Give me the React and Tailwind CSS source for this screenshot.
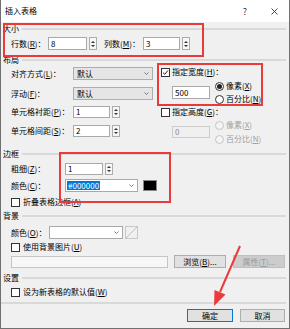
import clsx from 'clsx';

function Key({ text, k, tail = '' }) {
  return (
    <span className="whitespace-nowrap">
      {text}(<span className="underline">{k}</span>){tail}
    </span>
  );
}

function Group({ title, className }) {
  return (
    <div className={clsx('flex items-center h-[12px] pr-[3px]', className)}>
      <span>{title}</span>
      <div className="ml-[3px] flex-1 h-[2px] bg-[#d9d9d9]" />
    </div>
  );
}

function Arrows() {
  return (
    <div className="w-[8px] h-full border border-[#adadad] bg-[#f6f6f6] flex flex-col items-center justify-center gap-[2px]">
      <svg width="4" height="2" viewBox="0 0 4 2"><path d="M0 2 L2 0 L4 2Z" fill="#333" /></svg>
      <svg width="4" height="2" viewBox="0 0 4 2"><path d="M0 0 L2 2 L4 0Z" fill="#333" /></svg>
    </div>
  );
}

function Spin({ value, w = 'w-[38px]' }) {
  return (
    <div className="flex h-full items-stretch gap-[2px]">
      <div className={clsx(w, 'bg-white border border-[#a9a9a9] flex items-center pl-[2px]')}>{value}</div>
      <Arrows />
    </div>
  );
}

function Chevron({ color = '#606060' }) {
  return (
    <svg width="5" height="3" viewBox="0 0 5 3" className="shrink-0">
      <path d="M0.5 0.5 L2.5 2.5 L4.5 0.5" stroke={color} strokeWidth="0.8" fill="none" />
    </svg>
  );
}

function Check({ checked }) {
  return (
    <span className="w-[9px] h-[9px] border border-[#333] bg-white flex items-center justify-center shrink-0">
      {checked && (
        <svg width="7" height="7" viewBox="0 0 7 7">
          <path d="M1 3.6 L2.8 5.3 L6 1.4" stroke="#222" strokeWidth="1" fill="none" />
        </svg>
      )}
    </span>
  );
}

function Radio({ checked, disabled }) {
  return (
    <span className={clsx('w-[9px] h-[9px] rounded-full border flex items-center justify-center shrink-0',
      disabled ? 'border-[#c4c4c4] bg-[#f4f4f4]' : 'border-[#333] bg-white')}>
      {checked && <span className="w-[5px] h-[5px] rounded-full bg-[#222]" />}
    </span>
  );
}

function Btn({ children, w, primary, disabled, className }) {
  return (
    <div className={clsx(w, 'h-[13px] border flex items-center justify-center', className,
      primary ? 'border-[#0078d7] bg-[#e1e1e1]' : disabled ? 'border-[#bfbfbf] bg-[#cccccc] text-[#9a9a9a]' : 'border-[#adadad] bg-[#e1e1e1]')}>
      {children}
    </div>
  );
}

export default function App() {
  return (
    <div className="relative w-[290px] h-[329px] bg-[#f0f0f0] border-x border-b border-[#707070] flex flex-col text-[8px] leading-none text-black font-['Noto_Sans_CJK_SC','Noto_Sans',sans-serif]">
      {/* title bar */}
      <div className="h-[22px] bg-white flex items-center pl-[4px] pr-[11px] shrink-0">
        <span className="text-[8px]">插入表格</span>
        <span className="ml-auto text-[9px] text-[#333]">?</span>
        <svg width="7" height="7" viewBox="0 0 7 7" className="ml-[24px]">
          <path d="M0.5 0.5 L6.5 6.5 M6.5 0.5 L0.5 6.5" stroke="#333" strokeWidth="0.9" />
        </svg>
      </div>

      <div className="flex flex-col pl-[2px]">
        <Group title="大小" className="mt-[1px]" />
        <div className="mt-[2px] h-[13px] flex items-center pl-[8px]">
          <span className="w-[37px]"><Key text="行数" k="R" tail="：" /></span>
          <Spin value="8" w="w-[39px]" />
          <span className="ml-[7px] w-[39px]"><Key text="列数" k="M" tail="：" /></span>
          <Spin value="3" w="w-[37px]" />
        </div>

        <Group title="布局" className="mt-[4px]" />
        <div className="flex">
          <div className="w-[150px] pl-[8px] flex flex-col">
            <div className="mt-[1px] h-[13px] flex items-center">
              <span className="w-[62px]"><Key text="对齐方式" k="L" tail="：" /></span>
              <div className="w-[80px] h-full bg-[#e5e5e5] border border-[#adadad] flex items-center px-[3px]">
                <span className="flex-1">默认</span><Chevron />
              </div>
            </div>
            <div className="mt-[7px] h-[13px] flex items-center">
              <span className="w-[62px]"><Key text="浮动" k="F" tail="：" /></span>
              <div className="w-[80px] h-full bg-[#e5e5e5] border border-[#adadad] flex items-center px-[3px]">
                <span className="flex-1">默认</span><Chevron />
              </div>
            </div>
            <div className="mt-[6px] h-[12px] flex items-center">
              <span className="w-[62px]"><Key text="单元格衬距" k="P" tail="：" /></span>
              <Spin value="1" w="w-[37px]" />
            </div>
            <div className="mt-[7px] h-[12px] flex items-center">
              <span className="w-[62px]"><Key text="单元格间距" k="S" tail="：" /></span>
              <Spin value="2" w="w-[37px]" />
            </div>
          </div>

          <div className="pl-[8px] flex flex-col">
            <div className="h-[12px] flex items-center">
              <Check checked />
              <span className="ml-[2px]"><Key text="指定宽度" k="H" tail="：" /></span>
            </div>
            <div className="mt-[2px] flex">
              <div className="ml-[11px] self-center w-[38px] h-[13px] bg-white border border-[#a9a9a9] flex items-center pl-[2px]">500</div>
              <div className="ml-[5px] flex flex-col gap-[1px]">
                <div className="h-[12px] flex items-center"><Radio checked /><span className="ml-[2px]"><Key text="像素" k="X" /></span></div>
                <div className="h-[12px] flex items-center"><Radio /><span className="ml-[2px]"><Key text="百分比" k="N" /></span></div>
              </div>
            </div>
            <div className="mt-[1px] h-[12px] flex items-center">
              <Check />
              <span className="ml-[2px]"><Key text="指定高度" k="G" tail="：" /></span>
            </div>
            <div className="mt-[1px] flex">
              <div className="ml-[11px] self-center w-[38px] h-[12px] bg-[#f0f0f0] border border-[#cccccc] text-[#8a8a8a] flex items-center pl-[2px]">0</div>
              <div className="ml-[5px] flex flex-col gap-[2px] text-[#a0a0a0]">
                <div className="h-[12px] flex items-center"><Radio disabled /><span className="ml-[2px]"><Key text="像素" k="X" /></span></div>
                <div className="h-[12px] flex items-center"><Radio disabled /><span className="ml-[2px]"><Key text="百分比" k="N" /></span></div>
              </div>
            </div>
          </div>
        </div>

        <Group title="边框" className="mt-[3px]" />
        <div className="mt-[3px] h-[12px] flex items-center pl-[8px]">
          <span className="w-[54px]"><Key text="粗细" k="Z" tail="：" /></span>
          <Spin value="1" w="w-[38px]" />
        </div>
        <div className="mt-[4px] h-[13px] flex items-center pl-[8px]">
          <span className="w-[54px]"><Key text="颜色" k="C" tail="：" /></span>
          <div className="w-[73px] h-full bg-white border border-[#a9a9a9] flex items-center pl-[1px] pr-[3px]">
            <span className="bg-[#0078d7] text-white px-[1px] h-[9px] flex items-center">#000000</span>
            <span className="flex-1" />
            <Chevron />
          </div>
          <div className="ml-[5px] w-[14px] h-[11px] bg-black border border-[#888]" />
        </div>
        <div className="mt-[4px] h-[12px] flex items-center pl-[8px]">
          <Check />
          <span className="ml-[3px]"><Key text="折叠表格边框" k="A" /></span>
        </div>

        <Group title="背景" className="mt-[2px]" />
        <div className="mt-[4px] h-[13px] flex items-center pl-[8px]">
          <span className="w-[38px]"><Key text="颜色" k="O" tail="：" /></span>
          <div className="w-[74px] h-full bg-white border border-[#a9a9a9] flex items-center justify-end pr-[3px]">
            <Chevron />
          </div>
          <div className="ml-[2px] w-[13px] h-full border border-[#c8c8c8] bg-[#f0f0f0]">
            <svg width="11" height="11" viewBox="0 0 11 11"><path d="M0 11 L11 0" stroke="#b5b5b5" strokeWidth="0.8" /></svg>
          </div>
        </div>
        <div className="mt-[2px] h-[12px] flex items-center pl-[8px]">
          <Check />
          <span className="ml-[3px]"><Key text="使用背景图片" k="U" /></span>
        </div>
        <div className="mt-[2px] h-[13px] flex items-center pl-[8px]">
          <div className="w-[157px] h-[12px] bg-[#f7f7f7] border border-[#c5c5c5]" />
          <Btn w="w-[52px]" className="ml-[6px]"><Key text="浏览" k="B" tail="..." /></Btn>
          <Btn w="w-[52px]" className="ml-[7px]" disabled><Key text="属性" k="T" tail="..." /></Btn>
        </div>

        <Group title="设置" className="mt-[4px]" />
        <div className="mt-[2px] h-[12px] flex items-center pl-[8px]">
          <Check />
          <span className="ml-[3px]"><Key text="设为新表格的默认值" k="W" /></span>
        </div>
        <div className="mt-[4px] -ml-[2px] mr-[3px] h-[2px] bg-[#d9d9d9]" />
        <div className="mt-[5px] flex justify-end pr-[4px]">
          <Btn w="w-[46px]" primary>确定</Btn>
          <Btn w="w-[45px]" className="ml-[7px]">取消</Btn>
        </div>
      </div>

      {/* annotations */}
      <div className="absolute left-[2px] top-[23px] w-[201px] h-[34px] border-2 border-[#ea3a3a]" />
      <div className="absolute left-[156px] top-[63px] w-[106px] h-[43px] border-2 border-[#ea3a3a]" />
      <div className="absolute left-[58px] top-[152px] w-[112px] h-[51px] border-2 border-[#ea3a3a]" />
      <svg className="absolute left-[-1px] top-0 pointer-events-none" width="290" height="329" viewBox="0 0 290 329">
        <path d="M240 246 L220 292" stroke="#ea3a3a" strokeWidth="2" />
        <path d="M214 306 L225.5 294.6 L214.5 289.9Z" fill="#ea3a3a" />
      </svg>
    </div>
  );
}
